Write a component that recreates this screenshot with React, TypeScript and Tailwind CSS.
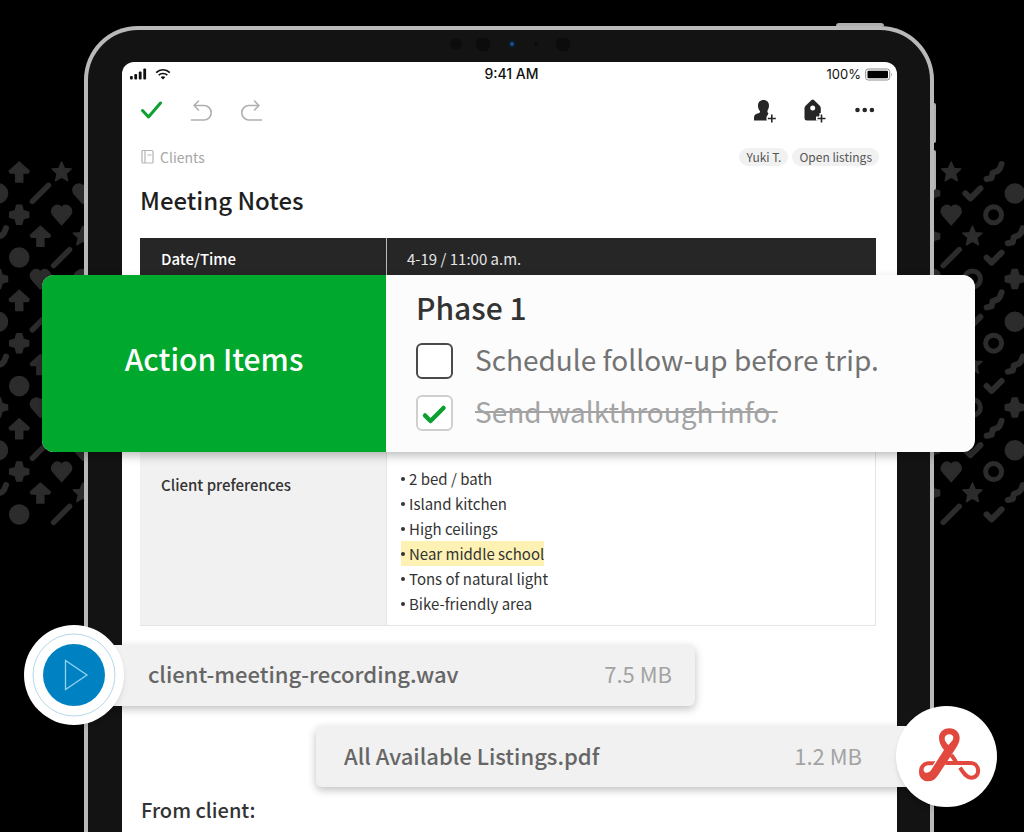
import React, { useState } from 'react';

type Shape = 'arrow' | 'star' | 'circle' | 'slash' | 'heart' | 'plus' | 'zigzag' | 'check' | 'ring';

// [column, shape] per row, the six rows repeat down the page
const LEFT_ROWS: [number, Shape][][] = [
  [[1, 'arrow'], [3, 'star']],
  [[0, 'circle'], [2, 'slash'], [4, 'heart']],
  [[1, 'plus'], [3, 'heart']],
  [[0, 'zigzag'], [2, 'arrow'], [4, 'star']],
  [[1, 'circle'], [3, 'slash']],
  [[0, 'plus'], [2, 'heart'], [4, 'circle']],
];

const RIGHT_ROWS: [number, Shape][][] = [
  [[1, 'star'], [3, 'zigzag']],
  [[0, 'plus'], [2, 'check'], [4, 'circle']],
  [[1, 'heart'], [3, 'ring']],
  [[0, 'plus'], [2, 'star'], [4, 'zigzag']],
  [[1, 'slash'], [3, 'check']],
  [[0, 'heart'], [2, 'ring'], [4, 'plus']],
];

const PREFERENCES = [
  { text: '2 bed / bath' },
  { text: 'Island kitchen' },
  { text: 'High ceilings' },
  { text: 'Near middle school', highlighted: true },
  { text: 'Tons of natural light' },
  { text: 'Bike-friendly area' },
];

function PatternShape({ shape }: { shape: Shape }) {
  switch (shape) {
    case 'arrow':
      return <path d="M0-10 10-1 9 1H3.500V10H-3.500V1H-9L-10-1Z" />;
    case 'star':
      return <path d="M0-10 2.8-3.4 9.5-3 4.4 1.6 6 8.6 0 5-6 8.6-4.4 1.6-9.5-3-2.8-3.4Z" />;
    case 'circle':
      return <circle r="9.5" />;
    case 'slash':
      return <path d="M-8 8 8-8" strokeWidth="5.5" strokeLinecap="round" />;
    case 'heart':
      return <path d="M0 10-8 1C-13-5-7-11-2-9L0-7 2-9C7-11 13-5 8 1Z" />;
    case 'plus':
      return <path d="M-2.500-9.500H2.500L4-4 9.500-2.500V2.500L4 4 2.500 9.500H-2.500L-4 4-9.500 2.500V-2.500L-4-4Z" />;
    case 'zigzag':
      return <path d="M-7 7-2 6-1 1 4-1 6-3 8-8" fill="none" strokeWidth="6" strokeLinecap="round" />;
    case 'check':
      return <path d="M-7 0-2 5 8-5" fill="none" strokeWidth="6" strokeLinecap="round" />;
    case 'ring':
      return <circle r="8" fill="none" strokeWidth="5" />;
  }
}

function Pattern({ rows, offset, className }: { rows: [number, Shape][][]; offset: number; className: string }) {
  return (
    <svg
      className={className}
      width="110"
      height="380"
      viewBox="0 0 110 380"
      fill="#2c2c2c"
      stroke="#2c2c2c"
      strokeWidth="1.5"
      strokeLinejoin="round"
      aria-hidden="true"
    >
      {Array.from({ length: 17 }, (_, row) =>
        rows[row % 6].map(([col, shape]) => (
          <g key={`${row}-${col}`} transform={`translate(${offset + col * 21.2} ${12 + row * 21.4})`}>
            <PatternShape shape={shape} />
          </g>
        ))
      )}
    </svg>
  );
}

function StatusBar() {
  return (
    <div className="grid h-6 grid-cols-3 items-center pr-1 pl-2 font-[Inter,sans-serif] text-[13px] leading-4 text-[#111]">
      <div className="flex items-center gap-2">
        <svg width="17" height="12" viewBox="0 0 17 12" fill="#111" aria-label="Signal">
          <rect x="0" y="8" width="2.800" height="3.500" rx="1" />
          <rect x="4.3" y="6" width="2.800" height="5.500" rx="1" />
          <rect x="8.8" y="3.500" width="2.800" height="8" rx="1" />
          <rect x="13.300" y="0.500" width="2.800" height="11" rx="1" />
        </svg>
        <svg width="16" height="12" viewBox="0 0 16 12" fill="none" stroke="#111" strokeWidth="1.700" aria-label="Wi-Fi">
          <path d="M1.200 4.600C5 .8 11 .8 14.800 4.600" />
          <path d="M3.700 7.200C6 4.900 10 4.900 12.300 7.200" />
          <path d="M5.700 9.200Q8 7.200 10.300 9.200L8 11.500Z" fill="#111" stroke="none" />
        </svg>
      </div>
      <span className="text-center text-sm leading-4 font-medium">9:41 AM</span>
      <div className="flex items-center justify-end gap-1">
        <span>100%</span>
        <svg width="28" height="13" viewBox="0 0 28 13" aria-label="Battery">
          <rect x="0.700" y="1" width="24" height="11" rx="2.500" fill="none" stroke="#8c8c8c" strokeWidth="1" />
          <rect x="2.500" y="2.800" width="20.500" height="7.500" rx="1" fill="#000" />
          <path d="M26 5V8.500Q27.500 6.700 26 5Z" fill="#777" />
        </svg>
      </div>
    </div>
  );
}

function Toolbar() {
  return (
    <div className="flex h-12 items-center justify-between pt-px pr-5 pl-[18px]">
      <div className="flex items-center gap-[26px]">
        <button type="button" aria-label="Done">
          <svg width="24" height="24" viewBox="0 0 24 24" fill="none" stroke="#0ba02f" strokeWidth="3" strokeLinecap="round" strokeLinejoin="round">
            <path d="M2.500 11.500 8.500 18 20.500 4" />
          </svg>
        </button>
        <button type="button" aria-label="Undo">
          <svg width="24" height="24" viewBox="0 0 24 24" fill="none" stroke="#b0b0b0" strokeWidth="1.600" strokeLinecap="round" strokeLinejoin="round">
            <path d="M8.500 2 4 6.500 8.500 11M4 6.500H14A7.200 7.200 0 0 1 14 21H1.500" />
          </svg>
        </button>
        <button type="button" aria-label="Redo">
          <svg width="24" height="24" viewBox="0 0 24 24" fill="none" stroke="#b0b0b0" strokeWidth="1.600" strokeLinecap="round" strokeLinejoin="round">
            <path d="M14.500 2 19 6.500 14.500 11M19 6.500H9A7.200 7.200 0 0 0 9 21H21.500" />
          </svg>
        </button>
      </div>
      <div className="flex items-center gap-[26px]">
        <button type="button" aria-label="Share with person">
          <svg width="24" height="24" viewBox="0 0 24 24">
            <path
              d="M10.500 1C14 1 16 3.400 16 6.600C16 9 15.200 10.300 14.500 11.500C14.300 13 14.600 14 15.500 14.400L14 17V21.500H1V18.500C1 15.800 3 15 5.500 14.300C7.200 13.800 7.500 12.800 6.500 11.500C5.600 10.300 5 9 5 6.600C5 3.400 7 1 10.500 1Z"
              fill="#262626"
            />
            <path d="M18.800 14V24.500M13.500 19.500H24" stroke="#fff" strokeWidth="4" />
            <path d="M18.800 15.500V23.500M14.800 19.500H22.800" stroke="#262626" strokeWidth="1.600" />
          </svg>
        </button>
        <button type="button" aria-label="Add tag">
          <svg width="24" height="24" viewBox="0 0 24 24">
            <path
              d="M8.500.9Q9.700-.1 10.900.9L16.800 6.800Q17.800 8 17.800 9.500V14L14.500 21.500H4Q1.500 21.500 1.500 19V9.500Q1.500 8 2.600 6.800Z"
              fill="#262626"
            />
            <circle cx="9.700" cy="9" r="2.500" fill="#fff" />
            <path d="M18.500 14V24.500M13 19.500H24" stroke="#fff" strokeWidth="4" />
            <path d="M18.500 15.500V23.500M14.500 19.500H22.500" stroke="#262626" strokeWidth="1.600" />
          </svg>
        </button>
        <button type="button" aria-label="More">
          <svg width="24" height="24" viewBox="0 0 24 24" fill="#262626">
            <circle cx="4.500" cy="11" r="2.300" />
            <circle cx="11.700" cy="11" r="2.300" />
            <circle cx="18.900" cy="11" r="2.300" />
          </svg>
        </button>
      </div>
    </div>
  );
}

interface TaskProps {
  label: string;
  checked: boolean;
  onChange: (checked: boolean) => void;
}

function Task({ label, checked, onChange }: TaskProps) {
  return (
    <label className="flex items-center gap-[22px]">
      <span className="relative flex">
        <input
          type="checkbox"
          checked={checked}
          onChange={(e) => onChange(e.target.checked)}
          className="h-9 w-[37px] appearance-none rounded-md border-2 border-[#4a4a4a] bg-white checked:border-[#cfcfcf]"
        />
        {checked && (
          <svg
            className="pointer-events-none absolute inset-0"
            width="37"
            height="36"
            viewBox="0 0 37 36"
            fill="none"
            stroke="#0ba02f"
            strokeWidth="4.500"
            strokeLinecap="round"
            strokeLinejoin="round"
          >
            <path d="M9 20.500 14.500 26 27.500 13" />
          </svg>
        )}
      </span>
      <span
        className={
          checked
            ? 'pb-1 text-[28px] leading-8 text-[#a3a3a3] line-through decoration-2'
            : 'pb-1 text-[28px] leading-8 text-[#737373]'
        }
      >
        {label}
      </span>
    </label>
  );
}

function ActionItems() {
  const [schedule, setSchedule] = useState(false);
  const [send, setSend] = useState(true);

  return (
    <div className="relative z-10 -mr-[99px] -ml-[98px] flex h-[177px] overflow-hidden rounded-xl bg-[#fcfcfc] shadow-[0_4px_10px_rgba(0,0,0,0.25)]">
      <div className="flex w-[344px] shrink-0 items-center justify-center bg-[#00a82d] pb-3">
        <h2 className="text-[30px] leading-10 font-medium text-white">Action Items</h2>
      </div>
      <div className="flex flex-col pt-3 pl-[30px]">
        <h3 className="text-[30px] leading-10 font-medium text-[#333]">Phase 1</h3>
        <div className="flex flex-col gap-4 pt-4">
          <Task label="Schedule follow-up before trip." checked={schedule} onChange={setSchedule} />
          <Task label="Send walkthrough info." checked={send} onChange={setSend} />
        </div>
      </div>
    </div>
  );
}

function NotesTable() {
  return (
    <table className="w-full table-fixed border-separate border-spacing-0 text-left">
      <colgroup>
        <col className="w-[247px]" />
        <col />
      </colgroup>
      <tbody>
        <tr className="h-[37px] bg-[#262626] text-[15px] leading-6 text-white">
          <th className="border-r border-[#bbb] py-0 pt-1 pl-[21px] font-medium">Date/Time</th>
          <td className="py-0 pt-1 pl-5 text-[#e5e5e5]">4-19 / 11:00 a.m.</td>
        </tr>
        <tr>
          <td colSpan={2} className="p-0">
            <ActionItems />
          </td>
        </tr>
        <tr className="text-[15px] text-[#333]">
          <th className="border-r border-b border-[#e5e5e5] bg-[#f1f1f1] pt-[21px] pl-[21px] align-top leading-6 font-medium">
            Client preferences
          </th>
          <td className="border-r border-b border-[#e5e5e5] pt-[14px] pb-[9px] pl-[14px] align-top">
            <ul>
              {PREFERENCES.map(({ text, highlighted }) => (
                <li
                  key={text}
                  className={
                    highlighted
                      ? 'flex w-fit items-center gap-1 bg-[#fdf2b3] leading-[25px]'
                      : 'flex w-fit items-center gap-1 leading-[25px]'
                  }
                >
                  <span className="size-1 rounded-full bg-[#333]" />
                  {text}
                </li>
              ))}
            </ul>
          </td>
        </tr>
      </tbody>
    </table>
  );
}

function RecordingFile() {
  return (
    <div className="relative mr-[202px] -ml-[98px] flex items-center">
      <button type="button" aria-label="Play recording" className="relative z-10 shrink-0 rounded-full bg-white shadow-md">
        <svg width="100" height="100" viewBox="0 0 100 100">
          <circle cx="50" cy="50" r="41" fill="none" stroke="#b5d9ea" strokeWidth="1" />
          <circle cx="50" cy="50" r="31" fill="#0081c2" />
          <path d="M41.500 35.500V64.500L63 50Z" fill="none" stroke="#8fd3f2" strokeWidth="1.300" />
        </svg>
      </button>
      <a
        href="#recording"
        className="-ml-[30px] flex h-[61px] grow items-center justify-between rounded-md bg-[#f1f1f1] pr-[23px] pb-1 pl-[54px] text-[22px] leading-8 shadow-[0_3px_8px_rgba(0,0,0,0.25)]"
      >
        <span className="font-medium text-[#666]">client-meeting-recording.wav</span>
        <span className="text-[#a3a3a3]">7.5 MB</span>
      </a>
    </div>
  );
}

function ListingsFile() {
  return (
    <div className="relative -mt-[19px] -mr-[100px] ml-[194px] flex items-center">
      <a
        href="#listings"
        className="-mr-[34px] flex h-[61px] grow items-center justify-between rounded-md bg-[#f1f1f1] pr-[68px] pb-1 pl-7 text-[22px] leading-8 shadow-[0_3px_8px_rgba(0,0,0,0.25)]"
      >
        <span className="font-medium text-[#666]">All Available Listings.pdf</span>
        <span className="text-[#a3a3a3]">1.2 MB</span>
      </a>
      <div className="z-10 shrink-0 rounded-full bg-white shadow-md">
        <svg width="101" height="101" viewBox="108 46 303 303" fill="#e1493f" aria-label="PDF">
          {/* band with the top loop and the left loop */}
          <path
            fillRule="evenodd"
            d="M268 113C288 113 299 127 299 142C299 155 292 166 284 178L240 245C230 262 221 272 205 272C188 272 177 260 177 243C177 224 190 212 206 212H226L218 224H206C193 224 188 236 192 242C197 250 208 246 213 239L252 178C243 168 237 155 237 142C237 127 248 113 268 113ZM268 131C260 131 253 137 254 145C255 152 260 158 265 163C271 156 280 149 280 142C280 135 275 131 268 131Z"
          />
          {/* bar running into the right loop */}
          <path
            d="M256 217H330C362 217 362 261 334 261C318 261 309 244 300 231"
            fill="none"
            stroke="#e1493f"
            strokeWidth="12"
          />
          <path d="M274 193 288 213" fill="none" stroke="#e1493f" strokeWidth="12" />
        </svg>
      </div>
    </div>
  );
}

export default function App() {
  return (
    <main className="relative flex min-h-screen flex-col overflow-hidden bg-black pt-[26px] pr-[90px] pl-[84px] font-['Noto_Sans_CJK_SC',sans-serif]">
      <Pattern rows={LEFT_ROWS} offset={-2} className="absolute top-[160px] left-0" />
      <Pattern rows={RIGHT_ROWS} offset={16} className="absolute top-[160px] right-0" />

      <div className="relative flex grow flex-col rounded-t-[54px] border-4 border-b-0 border-[#b9b9b9] bg-[#131313] pr-[33px] pl-[34px]">
        <span className="absolute -top-[7px] right-[46px] h-[3px] w-12 rounded-t-sm bg-[#b0b0b0]" />
        <span className="absolute top-[73px] -right-[6px] h-10 w-[2px] rounded-r-sm bg-[#b0b0b0]" />
        <span className="absolute top-[120px] -right-[6px] h-10 w-[2px] rounded-r-sm bg-[#b0b0b0]" />

        <div className="flex h-8 items-center justify-center">
          <svg width="124" height="16" viewBox="0 0 124 16" fill="#0c0c0c" aria-hidden="true">
            <circle cx="8" cy="6" r="6" />
            <circle cx="35" cy="6" r="7.500" />
            <circle cx="64" cy="6" r="4" fill="#0b1a2b" />
            <circle cx="64" cy="6" r="2" fill="#1d4f86" />
            <circle cx="88" cy="6" r="2" />
            <circle cx="115" cy="6" r="7.500" />
          </svg>
        </div>

        <div className="grow rounded-t-xl bg-white">
          <StatusBar />
          <Toolbar />

          <div className="pr-[21px] pb-2 pl-[18px]">
            <div className="flex h-[46px] items-center justify-between">
              <a href="#clients" className="flex items-center gap-[6px] text-[14px] leading-5 text-[#a6a6a6]">
                <svg width="14" height="16" viewBox="0 0 14 16" fill="none" stroke="#b5b5b5" strokeWidth="1.200">
                  <rect x="2" y="1.500" width="11" height="12.500" rx="1" />
                  <path d="M5 1.500V14M7.500 6H11.500" />
                </svg>
                Clients
              </a>
              <div className="-mr-[3px] flex gap-1 text-[12px] leading-[18px] text-[#555]">
                <span className="rounded-full bg-[#f1f1f1] px-[7px]">Yuki T.</span>
                <span className="rounded-full bg-[#f1f1f1] px-[7px]">Open listings</span>
              </div>
            </div>

            <h1 className="pt-[2px] pb-5 text-[24px] leading-9 font-medium text-[#1f1f1f]">Meeting Notes</h1>

            <NotesTable />
          </div>

          <div className="-mt-[9px]">
            <RecordingFile />
            <ListingsFile />
          </div>

          <p className="-mt-[9px] pl-[19px] text-[20px] leading-6 font-medium text-[#333]">From client:</p>
        </div>
      </div>
    </main>
  );
}
